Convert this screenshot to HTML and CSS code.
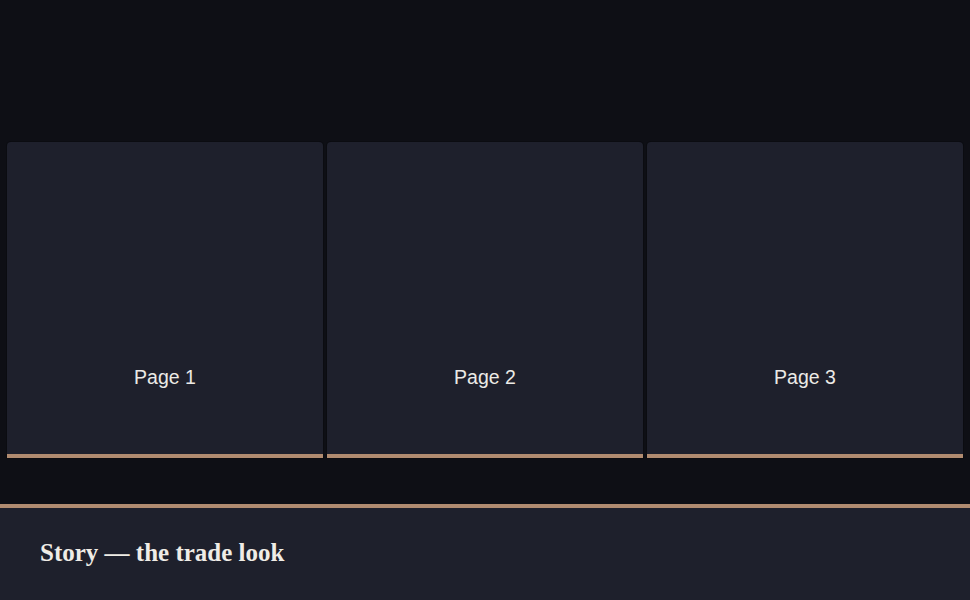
FILE: index.html
```html
<!DOCTYPE html>
<html>
<head>
<meta charset="utf-8">
<link rel="stylesheet" href="styles.css">
</head>
<body>
<main class="stage">
  <div class="pages">
    <div class="page"><span class="label">Page 1</span></div>
    <div class="page"><span class="label">Page 2</span></div>
    <div class="page"><span class="label">Page 3</span></div>
  </div>
</main>
<footer class="story">
  <h1 class="title">Story — the trade look</h1>
</footer>
</body>
</html>
```

FILE: styles.css
```css
html, body {
  margin: 0;
  padding: 0;
  background: #0e0f15;
}
.stage {
  padding: 142px 7px 0;
}
.pages {
  display: grid;
  grid-template-columns: repeat(3, 1fr);
  gap: 4px;
}
.page {
  aspect-ratio: 1 / 1;
  box-sizing: border-box;
  background: #1e202c;
  border-radius: 4px 4px 0 0;
  border-bottom: 4px solid #b08b70;
  box-shadow: 0 0 0 1px #0b0c11;
  display: flex;
  align-items: flex-end;
  justify-content: center;
  padding-bottom: 66px;
}
.label {
  font-family: "Liberation Sans", Arial, sans-serif;
  font-size: 19.5px;
  line-height: 22px;
  color: #eceae6;
}
.story {
  margin-top: 46px;
  border-top: 4px solid #b08b70;
  background: #1e202c;
  padding: 30px 40px 32px;
}
.title {
  margin: 0;
  font-family: "Liberation Serif", "Times New Roman", serif;
  font-weight: 700;
  font-size: 25px;
  line-height: 30px;
  color: #efece6;
}
```
